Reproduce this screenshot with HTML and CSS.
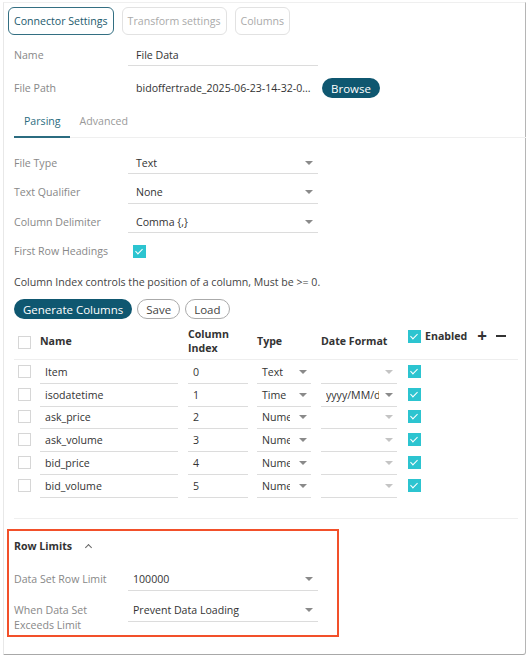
FILE: index.html
```html
<!DOCTYPE html>
<html>
<head>
<meta charset="utf-8">
<link rel="stylesheet" href="styles.css">
</head>
<body>
<div class="panel">
  <div class="tabs">
    <button class="tab active">Connector Settings</button>
    <button class="tab">Transform settings</button>
    <button class="tab">Columns</button>
  </div>

  <div class="content">
    <div class="field f-name">
      <span class="label">Name</span>
      <span class="input">File Data</span>
    </div>
    <div class="field f-path">
      <span class="label">File Path</span>
      <span class="input plain">bidoffertrade_2025-06-23-14-32-0...</span>
      <button class="btn-dark browse">Browse</button>
    </div>

    <div class="subtabs">
      <span class="subtab active">Parsing</span>
      <span class="subtab">Advanced</span>
    </div>

    <div class="field f-sel first">
      <span class="label">File Type</span>
      <span class="input select">Text<i class="caret"></i></span>
    </div>
    <div class="field f-sel">
      <span class="label">Text Qualifier</span>
      <span class="input select">None<i class="caret"></i></span>
    </div>
    <div class="field f-sel">
      <span class="label">Column Delimiter</span>
      <span class="input select">Comma {,}<i class="caret"></i></span>
    </div>
    <div class="field f-check">
      <span class="label">First Row Headings</span>
      <span class="cb on hd-cb"></span>
    </div>

    <p class="note">Column Index controls the position of a column, Must be &gt;= 0.</p>

    <div class="actions">
      <button class="btn-dark gen">Generate Columns</button>
      <button class="btn-outline">Save</button>
      <button class="btn-outline">Load</button>
    </div>

    <div class="table">
      <div class="trow thead">
        <span class="cb"></span>
        <span class="th">Name</span>
        <span class="th two">Column<br>Index</span>
        <span class="th">Type</span>
        <span class="th">Date Format</span>
        <span class="th en"><span class="cb on"></span>Enabled<span class="plus">+</span><span class="minus"></span></span>
      </div>
      <div class="tbody">
        <div class="trow">
          <span class="cb"></span>
          <span class="cell c-name">Item</span>
          <span class="cell c-idx">0</span>
          <span class="cell c-type">Text<i class="caret"></i></span>
          <span class="cell c-date"><i class="caret dim"></i></span>
          <span class="cb on"></span>
        </div>
        <div class="trow">
          <span class="cb"></span>
          <span class="cell c-name">isodatetime</span>
          <span class="cell c-idx">1</span>
          <span class="cell c-type">Time<i class="caret"></i></span>
          <span class="cell c-date"><span class="clip">yyyy/MM/dd</span><i class="caret"></i></span>
          <span class="cb on"></span>
        </div>
        <div class="trow">
          <span class="cb"></span>
          <span class="cell c-name">ask_price</span>
          <span class="cell c-idx">2</span>
          <span class="cell c-type"><span class="clip">Numeric</span><i class="caret"></i></span>
          <span class="cell c-date"><i class="caret dim"></i></span>
          <span class="cb on"></span>
        </div>
        <div class="trow">
          <span class="cb"></span>
          <span class="cell c-name">ask_volume</span>
          <span class="cell c-idx">3</span>
          <span class="cell c-type"><span class="clip">Numeric</span><i class="caret"></i></span>
          <span class="cell c-date"><i class="caret dim"></i></span>
          <span class="cb on"></span>
        </div>
        <div class="trow">
          <span class="cb"></span>
          <span class="cell c-name">bid_price</span>
          <span class="cell c-idx">4</span>
          <span class="cell c-type"><span class="clip">Numeric</span><i class="caret"></i></span>
          <span class="cell c-date"><i class="caret dim"></i></span>
          <span class="cb on"></span>
        </div>
        <div class="trow">
          <span class="cb"></span>
          <span class="cell c-name">bid_volume</span>
          <span class="cell c-idx">5</span>
          <span class="cell c-type"><span class="clip">Numeric</span><i class="caret"></i></span>
          <span class="cell c-date"><i class="caret dim"></i></span>
          <span class="cb on"></span>
        </div>
      </div>
    </div>

    <div class="sep"></div>
  </div>

  <div class="limits">
    <div class="lim-head">Row Limits <span class="chev"></span></div>
    <div class="field f-lim1">
      <span class="label">Data Set Row Limit</span>
      <span class="input select">100000<i class="caret"></i></span>
    </div>
    <div class="field f-lim2">
      <span class="label">When Data Set<br>Exceeds Limit</span>
      <span class="input select">Prevent Data Loading<i class="caret"></i></span>
    </div>
  </div>
</div>
</body>
</html>
```

FILE: styles.css
```css
* { box-sizing: border-box; }
html, body { margin: 0; padding: 0; background: #fff; }
body {
  font-family: "Open Sans", "Liberation Sans", sans-serif;
  font-size: 10.6px;
  color: #333;
  width: 528px;
  height: 656px;
  overflow: hidden;
}
button { font-family: inherit; cursor: pointer; }

.panel {
  margin: 2px 2px 0 3px;
  height: 653px;
  border-left: 1px solid #e8e8e8;
  border-top: 1px solid #efefef;
  border-right: 1px solid #b5b5b5;
  border-bottom: 1px solid #a8a8a8;
  border-bottom-right-radius: 3px;
  position: relative;
}

.tabs {
  display: flex;
  gap: 8px;
  padding: 4px 0 0 4px;
}
.tab {
  height: 28px;
  padding: 0 5px;
  font-size: 10.6px;
  background: #fff;
  color: #aaa;
  border: 1px solid #e2e2e2;
  border-radius: 6px;
}
.tab.active {
  color: #1c5a6d;
  border-color: #336f82;
}

.content { padding: 0 7px 0 10px; }

.field { display: flex; align-items: center; }
.label {
  width: 114px;
  flex: none;
  color: #888;
  line-height: 15px;
}
.input {
  width: 190px;
  height: 22px;
  padding-left: 8px;
  display: flex;
  align-items: center;
  border-bottom: 1px solid #dcdcdc;
  color: #333;
  position: relative;
}
.input.plain { border-bottom: none; width: 194px; }
.caret {
  position: absolute;
  right: 5px;
  top: 50%;
  margin-top: -2px;
  width: 0; height: 0;
  border-left: 4px solid transparent;
  border-right: 4px solid transparent;
  border-top: 4px solid #8a8a8a;
}
.caret.dim { border-top-color: #c4c4c4; }

.f-name { margin-top: 9px; }
.f-path { margin-top: 11px; height: 22px; }

.btn-dark {
  background: #0f5770;
  color: #fff;
  border: none;
  border-radius: 11px;
  font-size: 11.5px;
  height: 20px;
  padding: 0 9px;
}

.subtabs {
  display: flex;
  margin-top: 8px;
  height: 31px;
  border-bottom: 1px solid #efefef;
  margin-right: -8px;
}
.subtab {
  display: flex;
  align-items: center;
  padding: 0 9px 2px 10px;
  color: #999;
  border-bottom: 2px solid transparent;
  margin-bottom: -1px;
}
.subtab.active { color: #2b6c80; border-bottom-color: #2b6c80; }

.f-sel { margin-top: 7.5px; }
.f-sel.first { margin-top: 14px; }
.f-check { margin-top: 10px; height: 16px; }

.cb {
  display: inline-block;
  width: 13px;
  height: 13px;
  border: 1px solid #d6d6d6;
  background: #fff;
  flex: none;
  position: relative;
}
.cb.on {
  background: #2cc4d0;
  border-color: #2cc4d0;
}
.cb.on::after {
  content: "";
  position: absolute;
  left: 3px;
  top: 1px;
  width: 3px;
  height: 6px;
  border: solid #fff;
  border-width: 0 1.5px 1.5px 0;
  transform: rotate(45deg);
}
.hd-cb { margin-left: 5px; }

.note { margin: 15px 0 0 0; line-height: 16px; color: #444; }

.actions { display: flex; gap: 5px; margin-top: 9px; }
.btn-outline {
  height: 20px;
  border-radius: 11px;
  background: #fff;
  border: 1px solid #aaa;
  color: #444;
  font-size: 11.5px;
  padding: 0 8px;
}

.table { margin-top: 6px; }
.trow {
  display: grid;
  grid-template-columns: 22px 148px 69px 64px 87px auto;
  align-items: center;
  padding-left: 4px;
}
.thead {
  height: 35px;
  border-bottom: 1px solid #eee;
}
.thead > .th { margin-top: -2px; }
.th { font-weight: 700; color: #333; line-height: 14px; }
.thead > .th.en { display: flex; align-items: center; margin-top: -12px; }
.th.en .cb { margin-right: 4px; }
.plus { font-size: 17px; font-weight: 700; line-height: 14px; color: #333; margin-left: 10px; }
.minus { width: 10px; height: 2px; background: #333; display: inline-block; margin-left: 9px; margin-top: -1px; }

.tbody { margin-top: 1px; }
.tbody .trow { height: 22.8px; }
.cell {
  height: 22.8px;
  display: flex;
  align-items: center;
  padding-left: 5px;
  border-bottom: 1px solid #dcdcdc;
  position: relative;
  overflow: hidden;
  white-space: nowrap;
  color: #333;
}
.c-name { width: 138px; }
.c-idx { width: 60px; }
.c-type { width: 54px; }
.c-date { width: 76px; }
.cell .caret { right: 4px; }
.clip { display: block; overflow: hidden; white-space: nowrap; }
.c-type .clip { width: 28px; }
.c-date .clip { width: 53px; }
.tbody .cb { margin-top: -2px; }

.sep {
  margin-top: 20px;
  height: 1px;
  background: #efefef;
}

.limits {
  margin: 10px 0 0 3px;
  width: 332px;
  height: 108px;
  border: 2px solid #f2502a;
  padding: 0 0 0 5px;
}
.lim-head {
  font-weight: 700;
  color: #333;
  margin-top: 7px;
  display: flex;
  align-items: center;
  height: 16px;
}
.chev {
  display: inline-block;
  width: 5px;
  height: 5px;
  border-left: 1.3px solid #666;
  border-top: 1.3px solid #666;
  transform: rotate(45deg);
  margin-left: 14px;
  margin-top: 3px;
}
.limits .label { width: 114px; }
.limits .input { padding-left: 5px; }
.f-lim1 { margin-top: 15px; }
.f-lim2 { margin-top: 12px; align-items: flex-start; }
.f-lim2 .input { margin-top: -3px; }
```
